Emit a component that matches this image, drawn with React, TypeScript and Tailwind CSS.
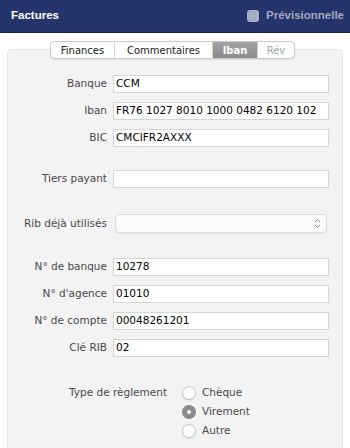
const fields = [
  { label: 'Banque', value: 'CCM' },
  { label: 'Iban', value: 'FR76 1027 8010 1000 0482 6120 102' },
  { label: 'BIC', value: 'CMCIFR2AXXX' },
];

const ribFields = [
  { label: 'N° de banque', value: '10278' },
  { label: "N° d'agence", value: '01010' },
  { label: 'N° de compte', value: '00048261201' },
  { label: 'Clé RIB', value: '02' },
];

const tabs = [
  { name: 'Finances', width: 'w-[63px]', state: 'normal' },
  { name: 'Commentaires', width: 'w-[98px]', state: 'normal' },
  { name: 'Iban', width: 'w-[45px]', state: 'active' },
  { name: 'Rév', width: 'w-[37px]', state: 'disabled' },
];

const payments = [
  { name: 'Chèque', checked: false },
  { name: 'Virement', checked: true },
  { name: 'Autre', checked: false },
];

function Row({ label, value }: { label: string; value: string }) {
  return (
    <div className="flex h-[18px] items-center">
      <span className="w-[99px] shrink-0 text-right text-[#4a4a4a]">{label}</span>
      <div className="ml-[6px] flex h-[18px] w-[216px] items-center border border-[#d6d6d6] bg-white px-[2px] text-black">
        {value}
      </div>
    </div>
  );
}

export default function App() {
  return (
    <div className="h-[448px] w-[350px] overflow-hidden bg-white font-['DejaVu_Sans',sans-serif] text-[10.5px]">
      {/* Header */}
      <div className="flex h-[33px] items-center justify-between border-b border-[#18224a] bg-[#25346b] pr-[6px] pl-[11px] font-['Liberation_Sans',Arial,sans-serif] text-[11.5px] font-bold">
        <span className="text-white">Factures</span>
        <div className="flex items-center gap-[7px]">
          <span className="h-[12px] w-[12px] rounded-[3px] bg-[#a7aec6]" />
          <span className="text-[#a3a9c2]">Prévisionnelle</span>
        </div>
      </div>

      {/* Tabs + panel */}
      <div className="pt-[8px]">
        <div className="relative z-10 ml-[50px] flex h-[18px] w-fit overflow-hidden rounded-[4px] border border-[#c9c9c9] bg-white text-[10px] shadow-[0_1px_1px_rgba(0,0,0,0.08)]">
          {tabs.map((tab, i) => (
            <div
              key={tab.name}
              className={`flex items-center justify-center ${tab.width} ${
                i > 0 ? 'border-l border-[#d4d4d4]' : ''
              } ${
                tab.state === 'active'
                  ? 'bg-gradient-to-b from-[#a3a3a3] to-[#8c8c8c] font-bold text-white'
                  : tab.state === 'disabled'
                    ? 'text-[#a3a3a3]'
                    : 'text-[#222]'
              }`}
            >
              {tab.name}
            </div>
          ))}
        </div>

        <div className="mx-[7px] -mt-[10px] h-[420px] rounded-[4px] border border-[#e6e6e6] bg-[#f3f3f3] pt-[25px]">
          <div className="flex flex-col gap-[9px]">
            {fields.map((f) => (
              <Row key={f.label} label={f.label} value={f.value} />
            ))}
          </div>

          <div className="mt-[23px]">
            <Row label="Tiers payant" value="" />
          </div>

          {/* Select */}
          <div className="mt-[26px] flex h-[19px] items-center">
            <span className="w-[99px] shrink-0 text-right text-[#4a4a4a]">Rib déjà utilisés</span>
            <div className="ml-[8px] flex h-[19px] w-[212px] items-center justify-end rounded-[4px] border border-[#dadada] bg-[#fbfbfb] pr-[5px] shadow-[0_1px_1px_rgba(0,0,0,0.06)]">
              <svg width="7" height="11" viewBox="0 0 7 11" fill="none" stroke="#8a8a8a" strokeWidth="1">
                <path d="M1 4 L3.5 1.5 L6 4" />
                <path d="M1 7 L3.5 9.5 L6 7" />
              </svg>
            </div>
          </div>

          <div className="mt-[25px] flex flex-col gap-[9px]">
            {ribFields.map((f) => (
              <Row key={f.label} label={f.label} value={f.value} />
            ))}
          </div>

          {/* Type de règlement */}
          <div className="mt-[29px] flex">
            <span className="flex h-[14px] w-[159px] shrink-0 items-center justify-end text-[#4a4a4a]">
              Type de règlement
            </span>
            <div className="ml-[15px] flex flex-col gap-[5px]">
              {payments.map((p) => (
                <div key={p.name} className="flex h-[14px] items-center gap-[6px]">
                  {p.checked ? (
                    <span className="flex h-[14px] w-[14px] items-center justify-center rounded-full bg-[#8b8b8b]">
                      <span className="h-[4px] w-[4px] rounded-full bg-white" />
                    </span>
                  ) : (
                    <span className="h-[14px] w-[14px] rounded-full border border-[#c4c4c4] bg-white shadow-[0_1px_1px_rgba(0,0,0,0.08)]" />
                  )}
                  <span className="text-[#4a4a4a]">{p.name}</span>
                </div>
              ))}
            </div>
          </div>
        </div>
      </div>
    </div>
  );
}
